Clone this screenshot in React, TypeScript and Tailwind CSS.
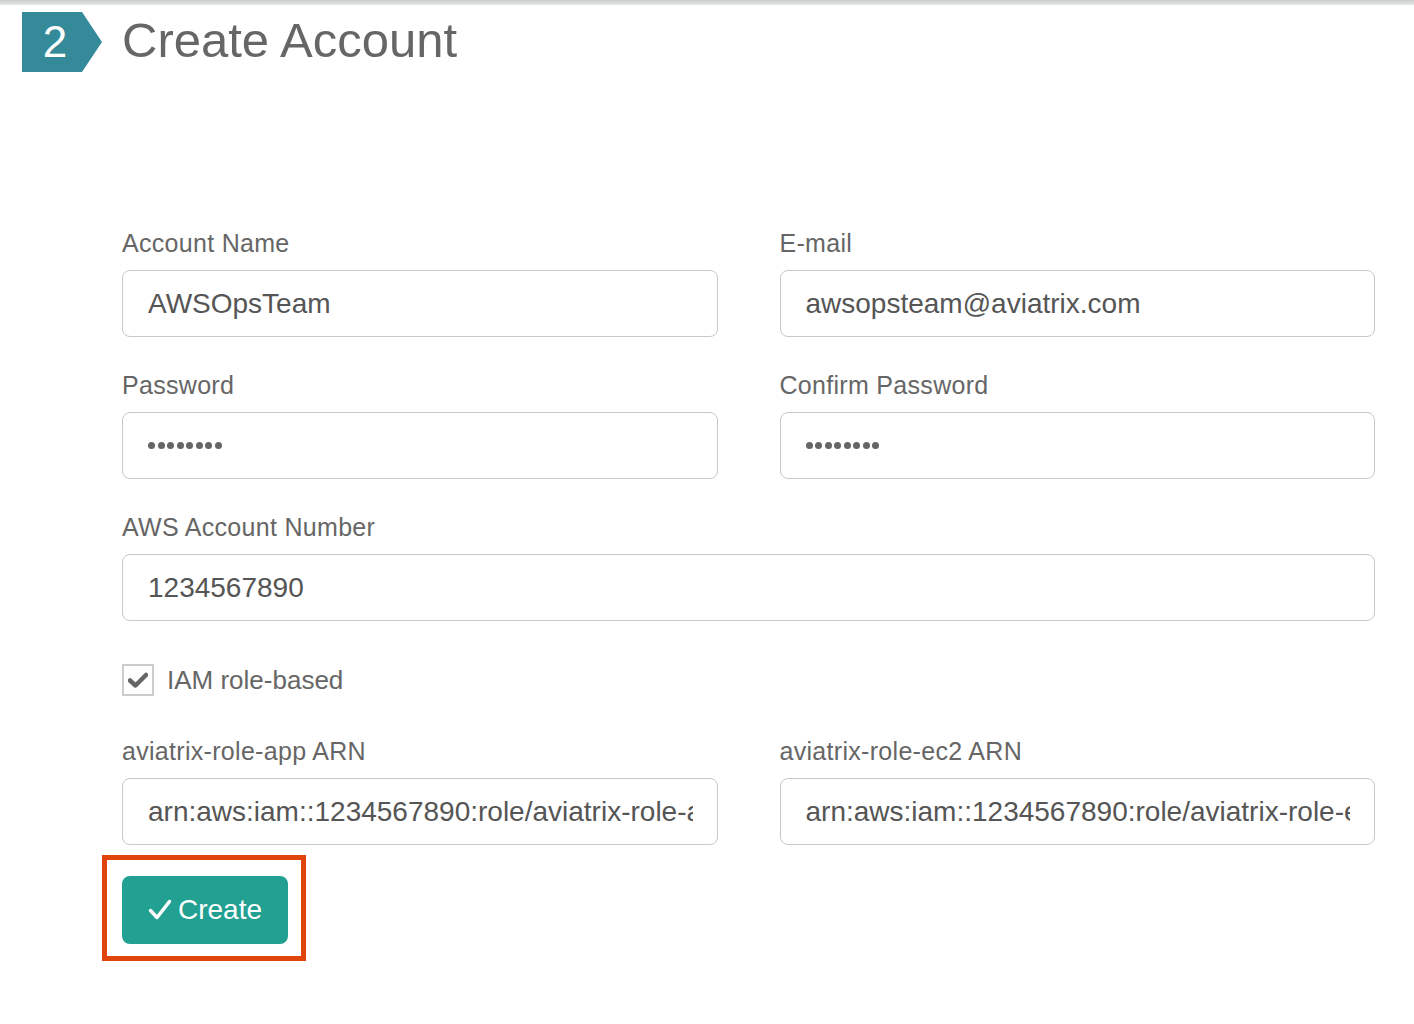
import React from "react";

const font = { fontFamily: '"Liberation Sans", Arial, sans-serif' };

function Field({ label, value, password }: { label: string; value: string; password?: boolean }) {
  return (
    <div className="flex flex-col min-w-0">
      <div className="h-[26px] leading-[26px] text-[25px] tracking-[0.3px] text-[#666] mb-[14px] whitespace-nowrap">{label}</div>
      <div className="h-[67px] border-[1.5px] border-[#c8c8c8] rounded-[8px] flex items-center pl-[25px] pr-[24px] overflow-hidden">
        {password ? (
          <div className="flex gap-[2.5px] mt-[-1px]">
            {Array.from({ length: 8 }).map((_, i) => (
              <span key={i} className="block w-[7px] h-[7px] rounded-full bg-[#666]" />
            ))}
          </div>
        ) : (
          <span className="text-[28px] text-[#555] whitespace-nowrap overflow-hidden">{value}</span>
        )}
      </div>
    </div>
  );
}

export default function App() {
  return (
    <div className="w-[1414px] h-[1024px] bg-white relative overflow-hidden" style={font}>
      <div className="h-[5px] bg-gradient-to-b from-[#c9cccd] to-[#e8eaea]" />
      <div className="flex items-start pl-[22px] pt-[7px]">
        <div className="relative w-[80px] h-[60px]">
          <svg width="80" height="60" viewBox="0 0 80 60" className="absolute inset-0">
            <polygon points="0,0 60,0 80,30 60,60 0,60" fill="#358a9a" />
          </svg>
          <span className="absolute left-0 w-[66px] top-0 h-[60px] flex items-center justify-center text-white text-[44px] leading-none">2</span>
        </div>
        <h1 className="ml-[20px] mt-[-2px] text-[49px] leading-[60px] text-[#666]">Create Account</h1>
      </div>

      <div className="pl-[122px] pr-[39px] pt-[158px]">
        <div className="grid grid-cols-2 gap-x-[62px] gap-y-[35px]">
          <Field label="Account Name" value="AWSOpsTeam" />
          <Field label="E-mail" value="awsopsteam@aviatrix.com" />
          <Field label="Password" value="" password />
          <Field label="Confirm Password" value="" password />
          <div className="col-span-2">
            <Field label="AWS Account Number" value="1234567890" />
          </div>
        </div>

        <div className="flex items-center mt-[43px] h-[32px]">
          <div className="w-[32px] h-[32px] border-2 border-[#cccccc] flex items-center justify-center">
            <svg width="20" height="16" viewBox="0 0 20 16">
              <path d="M2 8.5 L7.5 13.5 L18 3" fill="none" stroke="#666" strokeWidth="4.5" strokeLinecap="round" strokeLinejoin="round" />
            </svg>
          </div>
          <span className="ml-[13px] text-[26px] text-[#666]">IAM role-based</span>
        </div>

        <div className="grid grid-cols-2 gap-x-[62px] mt-[42px]">
          <Field label="aviatrix-role-app ARN" value="arn:aws:iam::1234567890:role/aviatrix-role-app" />
          <Field label="aviatrix-role-ec2 ARN" value="arn:aws:iam::1234567890:role/aviatrix-role-ec2" />
        </div>

        <div className="mt-[31px] relative w-[166px]">
          <button className="w-[166px] h-[68px] rounded-[8px] bg-[#22a091] text-white text-[28px] flex items-center justify-center">
            <svg width="24" height="22" viewBox="0 0 24 22" className="mr-[6px]">
              <path d="M2.5 11.5 L9 18.5 L21.5 2.5" fill="none" stroke="#fff" strokeWidth="3.5" strokeLinecap="round" strokeLinejoin="round" />
            </svg>
            Create
          </button>
          <div className="absolute left-[-20px] top-[-21px] right-[-18px] bottom-[-17px] border-[5px] border-[#e0450b] pointer-events-none" />
        </div>
      </div>
    </div>
  );
}
